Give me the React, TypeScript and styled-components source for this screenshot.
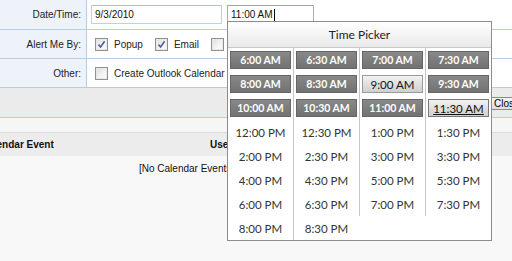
import React from "react";
import styled, { createGlobalStyle, css } from "styled-components";

const Global = createGlobalStyle`
  html, body { margin: 0; padding: 0; background: #f8f8f8; overflow: hidden; }
  body { font-family: "Liberation Sans", Arial, sans-serif; font-size: 10px; color: #222; }
  #root { width: 512px; height: 261px; overflow: hidden; position: relative; }
`;

const Page = styled.div`
  position: relative;
  width: 512px;
  height: 261px;
  overflow: hidden;
  background: #f8f8f8;
`;

const Form = styled.div`
  display: flex;
  flex-direction: column;
  background: #fff;
`;

const Row = styled.div<{ $h: number }>`
  display: grid;
  grid-template-columns: 87px 1fr;
  height: ${(p) => p.$h}px;
  border-bottom: 1px solid #b6cde6;
`;

const Label = styled.div`
  display: flex;
  align-items: center;
  justify-content: flex-end;
  padding-right: 5px;
  background: #eef3f9;
  border-right: 1px solid #b6cde6;
  color: #222;
`;

const Value = styled.div`
  display: flex;
  align-items: center;
  padding-left: 8px;
`;

const TextInput = styled.div<{ $w: number; $focus?: boolean }>`
  box-sizing: border-box;
  width: ${(p) => p.$w}px;
  height: 19px;
  margin-right: 5px;
  margin-left: ${(p) => (p.$focus ? 0 : -4)}px;
  border: 1px solid ${(p) => (p.$focus ? "#8db6dd" : "#c9ced4")};
  border-top-color: ${(p) => (p.$focus ? "#7ea9d4" : "#b9bec4")};
  background: #fff;
  display: flex;
  align-items: center;
  padding-left: 3px;
  font-size: 10px;
  color: #111;
`;

const Caret = styled.span`
  display: inline-block;
  width: 1px;
  height: 12px;
  background: #000;
  margin-left: 1px;
`;

const CheckItem = styled.label`
  display: flex;
  align-items: center;
  margin-right: 12px;
`;

const Box = styled.span`
  box-sizing: border-box;
  width: 13px;
  height: 13px;
  border: 1px solid #8f9193;
  background: linear-gradient(135deg, #dcdcdc 0%, #f5f5f5 60%, #fcfcfc 100%);
  box-shadow: inset 0 0 0 1px #e8e8e8;
  display: inline-flex;
  align-items: center;
  justify-content: center;
  margin-right: 6px;
`;

const CheckText = styled.span`
  color: #222;
`;

const Check = ({ checked, label }: { checked?: boolean; label: string }) => (
  <CheckItem>
    <Box>
      {checked && (
        <svg width="9" height="9" viewBox="0 0 9 9">
          <path d="M1.5 4.6 L3.6 7 L7.6 1.2" fill="none" stroke="#4a5fa0" strokeWidth="1.6" />
        </svg>
      )}
    </Box>
    <CheckText>{label}</CheckText>
  </CheckItem>
);

const Bar = styled.div`
  height: 29px;
  background: #ebebeb;
  border-bottom: 1px solid #b6cde6;
  display: flex;
  align-items: center;
  padding-left: 491px;
`;

const BarButton = styled.div`
  box-sizing: border-box;
  height: 13px;
  padding: 0 3px 0 2px;
  margin-top: 1px;
  border: 1px solid #8a8a8a;
  background: linear-gradient(#f6f6f6, #dedede);
  display: flex;
  align-items: center;
  color: #000;
  white-space: nowrap;
  width: 40px;
`;

const Spacer = styled.div`
  height: 14px;
  background: #f6f6f6;
  border-bottom: 1px solid #dcdcdc;
`;

const HeaderRow = styled.div`
  height: 23px;
  background: #ececec;
  display: flex;
  align-items: center;
  font-weight: bold;
  color: #111;
  margin-left: -19px;
  white-space: nowrap;
`;

const HeadCell = styled.div<{ $w: number }>`
  width: ${(p) => p.$w}px;
  flex: none;
`;

const EmptyMsg = styled.div`
  padding: 7px 0 0 139px;
  color: #111;
  white-space: nowrap;
`;

/* Time picker */
const Picker = styled.div`
  position: absolute;
  left: 227px;
  top: 21px;
  width: 263px;
  background: #fff;
  border: 1px solid #8c8c8c;
  font-family: Lato, "Open Sans", sans-serif;
  font-size: 11.5px;
  color: #333;
`;

const PickerHead = styled.div`
  height: 25px;
  display: flex;
  align-items: center;
  justify-content: center;
  background: linear-gradient(#ffffff, #e9e9e9);
  border-bottom: 1px solid #c8c8c8;
  color: #222;
  font-size: 12px;
`;

const Columns = styled.div`
  display: grid;
  grid-template-columns: 65px 66px 66px 66px;
  align-items: start;
`;

const Col = styled.div<{ $first?: boolean }>`
  display: flex;
  flex-direction: column;
  ${(p) =>
    !p.$first &&
    css`
      border-left: 1px solid #c6c6c6;
    `}
`;

const Cell = styled.div`
  height: 24px;
  display: flex;
  align-items: center;
  justify-content: center;
  white-space: nowrap;
`;

const TimeButton = styled.div<{ $light?: boolean; $sel?: boolean }>`
  box-sizing: border-box;
  width: 61px;
  height: 18px;
  display: flex;
  align-items: center;
  justify-content: center;
  ${(p) =>
    p.$light
      ? css`
          background: linear-gradient(#f2f2f2, #cfcfcf);
          border: 1px solid #9a9a9a;
          color: #111;
          font-weight: normal;
          font-size: 11.5px;
        `
      : css`
          background: linear-gradient(#888, #727272);
          border: 1px solid #666;
          color: #fff;
          font-weight: bold;
          font-size: 10.5px;
        `}
  ${(p) =>
    p.$sel &&
    css`
      text-decoration: underline;
      border-color: #777;
    `}
`;

type Slot = { t: string; btn?: boolean; light?: boolean; sel?: boolean };

const cols: Slot[][] = [
  [
    { t: "6:00 AM", btn: true },
    { t: "8:00 AM", btn: true },
    { t: "10:00 AM", btn: true },
    { t: "12:00 PM" },
    { t: "2:00 PM" },
    { t: "4:00 PM" },
    { t: "6:00 PM" },
    { t: "8:00 PM" },
  ],
  [
    { t: "6:30 AM", btn: true },
    { t: "8:30 AM", btn: true },
    { t: "10:30 AM", btn: true },
    { t: "12:30 PM" },
    { t: "2:30 PM" },
    { t: "4:30 PM" },
    { t: "6:30 PM" },
    { t: "8:30 PM" },
  ],
  [
    { t: "7:00 AM", btn: true },
    { t: "9:00 AM", btn: true, light: true },
    { t: "11:00 AM", btn: true },
    { t: "1:00 PM" },
    { t: "3:00 PM" },
    { t: "5:00 PM" },
    { t: "7:00 PM" },
  ],
  [
    { t: "7:30 AM", btn: true },
    { t: "9:30 AM", btn: true },
    { t: "11:30 AM", btn: true, light: true, sel: true },
    { t: "1:30 PM" },
    { t: "3:30 PM" },
    { t: "5:30 PM" },
    { t: "7:30 PM" },
  ],
];

export default function App() {
  return (
    <Page>
      <Global />
      <Form>
        <Row $h={29}>
          <Label>Date/Time:</Label>
          <Value>
            <TextInput $w={131}>9/3/2010</TextInput>
            <TextInput $w={87} $focus>
              11:00 AM
              <Caret />
            </TextInput>
          </Value>
        </Row>
        <Row $h={28}>
          <Label>Alert Me By:</Label>
          <Value>
            <Check checked label="Popup" />
            <Check checked label="Email" />
            <Check label="SMS" />
          </Value>
        </Row>
        <Row $h={28}>
          <Label>Other:</Label>
          <Value>
            <Check label="Create Outlook Calendar Event" />
          </Value>
        </Row>
      </Form>
      <Bar>
        <BarButton>Close</BarButton>
      </Bar>
      <Spacer />
      <HeaderRow>
        <HeadCell $w={229}>Calendar Event</HeadCell>
        <HeadCell $w={80}>User</HeadCell>
      </HeaderRow>
      <EmptyMsg>[No Calendar Events]</EmptyMsg>

      <Picker>
        <PickerHead>Time Picker</PickerHead>
        <Columns>
          {cols.map((c, i) => (
            <Col key={i} $first={i === 0}>
              {c.map((s) => (
                <Cell key={s.t}>
                  {s.btn ? (
                    <TimeButton $light={s.light} $sel={s.sel}>
                      {s.t}
                    </TimeButton>
                  ) : (
                    s.t
                  )}
                </Cell>
              ))}
            </Col>
          ))}
        </Columns>
      </Picker>
    </Page>
  );
}
